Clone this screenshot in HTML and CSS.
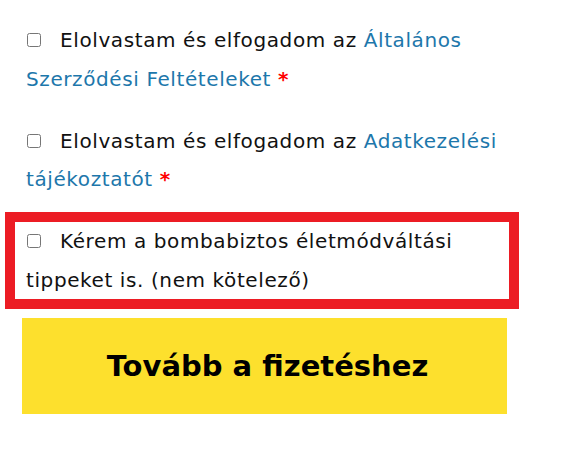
FILE: index.html
```html
<!DOCTYPE html>
<html lang="hu">
<head>
<meta charset="utf-8">
<link rel="stylesheet" href="styles.css">
</head>
<body>
<form class="checkout">
  <p class="item">
    <label><input type="checkbox" class="check">Elolvastam és elfogadom az <a href="#" class="link">Általános Szerződési Feltételeket</a> <abbr class="req">*</abbr></label>
  </p>
  <p class="item">
    <label><input type="checkbox" class="check">Elolvastam és elfogadom az <a href="#" class="link">Adatkezelési tájékoztatót</a> <abbr class="req">*</abbr></label>
  </p>
  <p class="item item-highlight">
    <label><input type="checkbox" class="check">Kérem a bombabiztos életmódváltási tippeket is. (nem kötelező)</label>
  </p>
  <button type="button" class="pay">Tovább a fizetéshez</button>
</form>
</body>
</html>
```
FILE: styles.css
```css
html, body {
  margin: 0;
  padding: 0;
  background: #fff;
}

.checkout {
  width: 514px;
  margin: 0 0 0 5px;
  padding-top: 11px;
  display: flex;
  flex-direction: column;
  gap: 3.5px;
  font-family: "DejaVu Sans", "Liberation Sans", sans-serif;
}

.item {
  margin: 0;
  border: 10px solid transparent;
  padding: 0 4px 0 11px;
  font-size: 20px;
  line-height: 38.5px;
  letter-spacing: 0.6px;
  color: #111;
}

.item-highlight {
  border-color: #ec1c24;
}

.check {
  width: 14px;
  height: 14px;
  margin: 0 19px 0 1px;
  vertical-align: baseline;
}

.link {
  color: #1d77ab;
  text-decoration: none;
}

.req {
  color: #f00;
  font-weight: 700;
  text-decoration: none;
  border: 0;
}

.pay {
  margin: 5.5px 0 0 17px;
  width: 485px;
  height: 96px;
  border: 0;
  border-radius: 0;
  background: #fde02d;
  color: #000;
  font-family: "DejaVu Sans", "Liberation Sans", sans-serif;
  font-size: 29px;
  font-weight: 700;
  letter-spacing: 0;
  padding: 0 0 0 6px;
  cursor: pointer;
}
```
